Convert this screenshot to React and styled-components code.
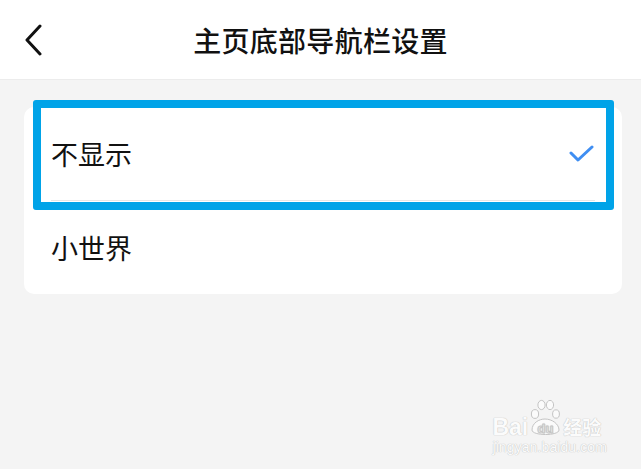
import React from 'react';
import styled, { createGlobalStyle } from 'styled-components';

const GlobalStyle = createGlobalStyle`
	html, body {
		margin: 0;
		padding: 0;
		background: #f4f4f4;
	}
	body {
		font-family: "Noto Sans CJK SC", "Noto Sans", sans-serif;
		color: #111;
	}
`;

const Page = styled.div`
	position: relative;
	width: 641px;
	height: 469px;
	overflow: hidden;
	background: #f4f4f4;
`;

const Header = styled.header`
	height: 80px;
	background: #fff;
	border-bottom: 1px solid #ececec;
	display: grid;
	grid-template-columns: 60px 1fr 60px;
	align-items: center;
	box-sizing: border-box;
`;

const BackButton = styled.button`
	border: 0;
	background: none;
	padding: 0 0 0 24px;
	display: flex;
	align-items: center;
	height: 100%;
	cursor: pointer;
`;

const Title = styled.h1`
	margin: 0;
	text-align: center;
	font-size: 28px;
	font-weight: 500;
	color: #111;
	letter-spacing: 0.3px;
`;

const Body = styled.main`
	padding: 27px 19px 0 24px;
`;

const Card = styled.div`
	position: relative;
	background: #fff;
	border-radius: 10px;
	padding: 0 27px 0 27px;
`;

const Row = styled.div`
	height: 93px;
	display: flex;
	align-items: center;
	justify-content: space-between;
	font-size: 27px;
	color: #111;
	border-bottom: ${(p) => (p.last ? 'none' : '1px solid #e6e6e6')};
`;

const Highlight = styled.div`
	position: absolute;
	top: -7px;
	left: 9px;
	right: 8px;
	height: 110px;
	box-sizing: border-box;
	border: 8px solid #00a3e8;
	border-radius: 3px;
	pointer-events: none;
`;

const Watermark = styled.div`
	position: absolute;
	right: 34px;
	bottom: 14px;
	display: flex;
	flex-direction: column;
	align-items: flex-start;
	color: #fbfbfb;
	font-family: "Liberation Sans", Arial, sans-serif;
	text-shadow: 0 0 1px #c4c4c4, 0 0 1px #c4c4c4;
`;

const MarkTop = styled.div`
	height: 38px;
	display: flex;
	align-items: flex-end;
	font-size: 23px;
	font-weight: 700;
	line-height: 20px;
`;

const MarkCn = styled.span`
	font-family: "Noto Sans CJK SC", sans-serif;
	font-size: 19px;
	font-weight: 700;
	line-height: 20px;
	margin-left: 1px;
`;

const MarkUrl = styled.div`
	font-size: 14px;
	line-height: 16px;
	margin-top: 2px;
	letter-spacing: 0.1px;
`;

function Chevron() {
	return (
		<svg width="18" height="32" viewBox="0 0 18 32">
			<polyline points="16,2 3,16 16,30" fill="none" stroke="#111" strokeWidth="3" strokeLinecap="round" strokeLinejoin="round" />
		</svg>
	);
}

function Check() {
	return (
		<svg width="26" height="20" viewBox="0 0 26 20">
			<polyline points="2,9 9,16 23,3" fill="none" stroke="#3f8ef2" strokeWidth="3" strokeLinecap="round" strokeLinejoin="round" />
		</svg>
	);
}

function Paw() {
	return (
		<svg width="32" height="38" viewBox="0 0 32 38" style={{ margin: '0 1px', display: 'block' }}>
			<g fill="#fbfbfb" stroke="#c4c4c4" strokeWidth="1">
				<ellipse cx="6" cy="15" rx="3.6" ry="4.4" />
				<ellipse cx="12.5" cy="6" rx="3.6" ry="4.6" />
				<ellipse cx="21" cy="6" rx="3.6" ry="4.6" />
				<ellipse cx="27" cy="15" rx="3.4" ry="4.2" />
				<path d="M3 31 C3 24 10 20 16 20 C23 20 30 25 30 31 C30 37 3 37 3 31 Z" />
			</g>
			<text x="16.5" y="34" textAnchor="middle" fontSize="13" fontWeight="700" fill="#fbfbfb" stroke="#c4c4c4" strokeWidth="0.5" fontFamily="Liberation Sans, sans-serif">du</text>
		</svg>
	);
}

export default function App() {
	return (
		<>
			<GlobalStyle />
			<Page>
				<Header>
					<BackButton aria-label="返回">
						<Chevron />
					</BackButton>
					<Title>主页底部导航栏设置</Title>
					<span />
				</Header>
				<Body>
					<Card>
						<Row>
							<span>不显示</span>
							<Check />
						</Row>
						<Row last>
							<span>小世界</span>
						</Row>
						<Highlight />
					</Card>
				</Body>
				<Watermark>
					<MarkTop>
						<span>Bai</span>
						<Paw />
						<MarkCn>经验</MarkCn>
					</MarkTop>
					<MarkUrl>jingyan.baidu.com</MarkUrl>
				</Watermark>
			</Page>
		</>
	);
}
